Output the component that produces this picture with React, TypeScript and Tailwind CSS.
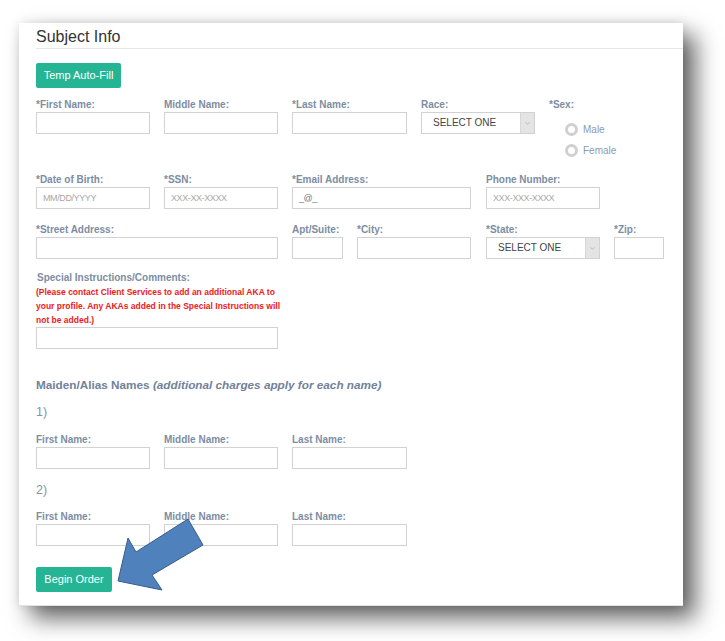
import { ChevronDown } from "lucide-react";

const labelCls = "block text-[10px] font-bold leading-[14px] text-[#7d8da3] whitespace-nowrap";
const inputCls =
  "block h-[22px] border border-[#d2d2d2] bg-white px-[6px] text-[9px] tracking-[-0.4px] text-[#777] placeholder:text-[#a8a8a8] outline-none";

type FieldProps = { label: string; width: number; placeholder?: string; value?: string; className?: string };

const Field = ({ label, width, placeholder, value, className = "" }: FieldProps) => (
  <div className={className}>
    <label className={labelCls}>{label}</label>
    <input className={inputCls} style={{ width }} placeholder={placeholder} defaultValue={value} />
  </div>
);

const SelectBox = ({ label, className = "" }: { label: string; className?: string }) => (
  <div className={className}>
    <label className={labelCls}>{label}</label>
    <div className="flex h-[22px] w-[114px] border border-[#d2d2d2] bg-white">
      <span className="flex-1 pl-[11px] text-[10px] leading-[20px] text-[#444]">SELECT ONE</span>
      <span className="flex w-[14px] items-center justify-center border-l border-[#d8d8d8] bg-[#e4e4e4]">
        <ChevronDown size={7} strokeWidth={2} className="text-[#999]" />
      </span>
    </div>
  </div>
);

const Radio = ({ label }: { label: string }) => (
  <div className="flex h-[21px] items-center gap-[5px]">
    <span className="h-[13px] w-[13px] rounded-full border-[3px] border-[#d0d0d0] bg-white" />
    <span className="text-[10px] text-[#8c9cb0]">{label}</span>
  </div>
);

const NameRow = ({ className = "" }: { className?: string }) => (
  <div className={`flex gap-[14px] ${className}`}>
    <Field label="First Name:" width={114} />
    <Field label="Middle Name:" width={114} />
    <Field label="Last Name:" width={115} />
  </div>
);

export default function App() {
  return (
    <div className="relative min-h-[641px] w-[725px] overflow-hidden bg-white font-['Liberation_Sans',Arial,sans-serif]">
      <div className="ml-[19px] mt-[23px] h-[583px] w-[664px] border-b border-[#e2e2e2] bg-white pt-[4px] shadow-[12px_12px_22px_rgba(0,0,0,0.62),0_0_10px_rgba(0,0,0,0.1)]">
        <h2 className="ml-[17px] border-b border-[#e6e6e6] pb-[1px] text-[16px] leading-[20px] text-[#333]">Subject Info</h2>

        <div className="pl-[17px]">
          <button className="mt-[14px] h-[25px] w-[85px] rounded-[2px] bg-[#26b594] text-[11px] text-white">Temp Auto-Fill</button>

          {/* row 1 */}
          <div className="mt-[10px] flex h-[75px] items-start gap-[14px]">
            <Field label="*First Name:" width={114} />
            <Field label="Middle Name:" width={114} />
            <Field label="*Last Name:" width={115} />
            <SelectBox label="Race:" />
            <div>
              <label className={labelCls}>*Sex:</label>
              <div className="ml-[16px] mt-[7px]">
                <Radio label="Male" />
                <Radio label="Female" />
              </div>
            </div>
          </div>

          {/* row 2 */}
          <div className="flex">
            <Field label="*Date of Birth:" width={114} placeholder="MM/DD/YYYY" />
            <Field label="*SSN:" width={114} placeholder="XXX-XX-XXXX" className="ml-[14px]" />
            <Field label="*Email Address:" width={179} value="_@_" className="ml-[14px]" />
            <Field label="Phone Number:" width={114} placeholder="XXX-XXX-XXXX" className="ml-[15px]" />
          </div>

          {/* row 3 */}
          <div className="mt-[14px] flex">
            <Field label="*Street Address:" width={242} />
            <Field label="Apt/Suite:" width={51} className="ml-[14px]" />
            <Field label="*City:" width={114} className="ml-[14px]" />
            <SelectBox label="*State:" className="ml-[15px]" />
            <Field label="*Zip:" width={50} className="ml-[14px]" />
          </div>

          <div className="mt-[12px]">
            <label className={`${labelCls} pl-px`}>Special Instructions/Comments:</label>
            <p className="w-[250px] text-[8.5px] font-bold leading-[14px] text-[#f01818]">
              (Please contact Client Services to add an additional AKA to your profile. Any AKAs added in the Special Instructions will not be added.)
            </p>
            <input className={`${inputCls} w-[242px]`} />
          </div>

          <h3 className="mt-[28px] text-[11.75px] font-bold leading-[16px] text-[#718299]">
            Maiden/Alias Names <em>(additional charges apply for each name)</em>
          </h3>

          <div className="mt-[11px] text-[12.5px] leading-[16px] text-[#8495aa]">1)</div>
          <NameRow className="mt-[13px]" />

          <div className="mt-[13px] text-[12.5px] leading-[16px] text-[#8495aa]">2)</div>
          <NameRow className="mt-[12px]" />

          <button className="mt-[21px] h-[25px] w-[76px] rounded-[2px] bg-[#26b594] text-[11px] text-white">Begin Order</button>
        </div>
      </div>

      <svg className="pointer-events-none absolute left-0 top-0" width="725" height="641">
        <polygon
          points="118,581 128,538 136,552 188,519 203,545 152,575 162,590"
          fill="#4f81bd"
          stroke="#385d8a"
          strokeWidth="1"
          strokeLinejoin="miter"
        />
      </svg>
    </div>
  );
}
